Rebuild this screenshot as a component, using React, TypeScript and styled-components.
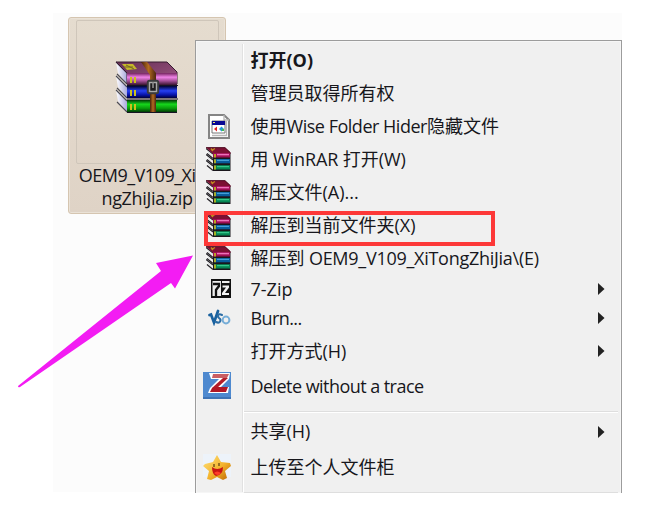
import React from "react";
import styled, { createGlobalStyle } from "styled-components";

const GlobalStyle = createGlobalStyle`
  body { margin: 0; background: #fff; }
  * { box-sizing: border-box; }
`;

const Page = styled.main`
  position: relative;
  width: 651px;
  height: 519px;
  padding: 13px 0 0 53px;
  overflow: hidden;
  background: #fff;
  color: #17171c;
  font-family: "Open Sans", "Noto Sans CJK SC", sans-serif;
  font-size: 18px;
`;

const Desktop = styled.section`
  width: 569px;
  height: 479px;
  padding: 4px 0 0 15px;
  background: #fcfcfc;
`;

const FileTile = styled.div`
  width: 158px;
  height: 197px;
  padding: 2px 7px;
  border: 1px solid #d5c5b0;
  border-radius: 3px;
  background: linear-gradient(#e5dccf, #dfd3c6);
  box-shadow: inset 0 0 0 1px #eae2d7;
`;

const Thumbnail = styled.div`
  display: flex;
  width: 143px;
  height: 144px;
  padding: 40px 0 0 38px;
  border: 1px solid #cfc6ba;
  border-radius: 2px;
`;

const FileName = styled.div`
  margin-left: -7px;
  width: 156px;
  line-height: 23px;
  text-align: center;
  white-space: nowrap;
`;

const NameLine = styled.div<{ $spacing: number }>`
  letter-spacing: ${(p) => p.$spacing}px;
`;

const Menu = styled.nav`
  position: absolute;
  left: 194.5px;
  top: 40px;
  width: 427.5px;
  height: 453px;
  padding: 3px 3px 0;
  border: 1.5px solid #9c9c9c;
  border-bottom: 0;
  background: #f0f0f0;
  box-shadow: inset 0 0 0 1px #f6f6f6;
`;

const MenuBody = styled.div`
  height: 448px;
  background: linear-gradient(to right, transparent 43px, #e1e1e1 43px, #e1e1e1 44px, #fff 44px, #fff 45px, transparent 45px);
`;

const Row = styled.div<{ $height: number }>`
  display: grid;
  grid-template-columns: 52px 1fr 20px;
  align-items: center;
  height: ${(p) => p.$height}px;
`;

const IconCell = styled.span<{ $shift: number }>`
  display: flex;
  padding-left: ${(p) => p.$shift}px;
`;

const Label = styled.span<{ $bold?: boolean; $lift: number }>`
  display: flex;
  align-items: baseline;
  height: 24px;
  margin-bottom: ${(p) => p.$lift}px;
  line-height: 24px;
  font-weight: ${(p) => (p.$bold ? 700 : 400)};
  white-space: pre;
`;

const Han = styled.span`
  font-family: "Noto Sans CJK SC", sans-serif;
  font-size: 18px;
`;

const Latin = styled.span<{ $spacing: number }>`
  letter-spacing: ${(p) => p.$spacing}px;
`;

const Separator = styled.hr<{ $before: number; $after: number }>`
  height: 2px;
  margin: ${(p) => p.$before}px 0 ${(p) => p.$after}px 45px;
  border: 0;
  border-top: 1px solid #dedede;
  background: #fff;
`;

const Highlight = styled.div`
  position: absolute;
  left: 204px;
  top: 211px;
  width: 291px;
  height: 35px;
  border: 4px solid #fd3838;
`;

const Pointer = styled.svg`
  position: absolute;
  left: 0;
  top: 240px;
`;

const Archive = () => (
  <svg width="64" height="53" viewBox="0 0 64 53">
    <defs>
      <linearGradient id="violet" x2="0" y2="1"><stop stopColor="#74245f" /><stop offset=".35" stopColor="#f083e7" /><stop offset=".65" stopColor="#a65099" /><stop offset="1" stopColor="#39142f" /></linearGradient>
      <linearGradient id="blue" x2="0" y2="1"><stop stopColor="#02022f" /><stop offset=".4" stopColor="#2640f4" /><stop offset=".75" stopColor="#0712a5" /><stop offset="1" stopColor="#010038" /></linearGradient>
      <linearGradient id="green" x2="0" y2="1"><stop stopColor="#003a05" /><stop offset=".35" stopColor="#16d71c" /><stop offset=".7" stopColor="#089b0a" /><stop offset="1" stopColor="#013906" /></linearGradient>
      <linearGradient id="cover" x2="1" y2="1"><stop stopColor="#663055" /><stop offset=".6" stopColor="#874670" /><stop offset="1" stopColor="#a55a90" /></linearGradient>
      <linearGradient id="strap"><stop stopColor="#47230c" /><stop offset=".5" stopColor="#b36b20" /><stop offset="1" stopColor="#4d260e" /></linearGradient>
      <linearGradient id="pages"><stop stopColor="#fff" /><stop offset="1" stopColor="#a9a9dc" /></linearGradient>
    </defs>
    {[28, 14, 0].map((y) => (
      <g key={y} transform={`translate(0 ${y})`}>
        <path d="M1 1 3 12 12 23 12 11Z" fill="url(#pages)" />
        <path d="M1 1 12 12M2 13 12 23" stroke="#4b4b55" strokeWidth="1.1" />
      </g>
    ))}
    <path d="M1 1H52L62 11V23H12V12Z" fill="url(#cover)" stroke="#361c31" strokeWidth="1" />
    <path d="M12 12H62V24H12Z" fill="url(#violet)" />
    <path d="M12 25H62V37H12Z" fill="url(#blue)" />
    <path d="M12 39H62V51H12Z" fill="url(#green)" />
    <path d="M12 24.5H63M12 38H63M12 51.5H62" stroke="#161323" />
    <path d="M7 3 18 3 22 8 12 9Z" fill="#c5b82a" />
    <path d="M11 4 19 8M9 6 18 6" stroke="#776526" />
    <path d="M16 16V22M20 16V22M16 29V35M20 29V35M16 43V49M20 43V49" stroke="#cbc11c" strokeWidth="2" />
    <path d="M26 1H32L41 12V24H35V14Z" fill="url(#strap)" />
    <path d="M35 31H41V51H35Z" fill="url(#strap)" />
    <rect x="33.5" y="20.5" width="9" height="11" rx="1" fill="#1e1d20" stroke="#3a3a3c" strokeWidth="3.4" />
    <rect x="34.5" y="21.5" width="7" height="9" fill="none" stroke="#aaa" strokeWidth="1.4" />
    <path d="M38 21V27" stroke="#8d8d8d" strokeWidth="1.6" />
  </svg>
);

const Books = () => (
  <svg width="26" height="25" viewBox="0 0 26 25">
    {[12, 6, 0].map((y) => (
      <g key={y} transform={`translate(0 ${y})`}>
        <path d="M0 1 7 6.5V12L1 6.5Z" fill="#fbfbfb" />
        <path d="M0 1.5 7 7M1 6.5 7 11.5" stroke="#28262b" strokeWidth="1.3" />
        <path d="M1.5 4.5 7 9.3" stroke="#c5c5ca" strokeWidth=".6" />
      </g>
    ))}
    <path d="M7 6H24.5V24H7Z" fill="#1a161c" />
    <path d="M0 .5H19L24.5 5.5V7H7Z" fill="#7d1033" />
    <path d="M0 .7H19L24.5 5.8" fill="none" stroke="#4c0b20" />
    <path d="M7 6H24V10.5H7Z" fill="#9e0c53" />
    <path d="M11 7.6H23" stroke="#ee72b9" strokeWidth="1.5" />
    <path d="M8 12H24V16.3H8Z" fill="#075b9a" />
    <path d="M11 13.4H23" stroke="#469fd4" strokeWidth="1.3" />
    <path d="M8 18.2H24V22.5H8Z" fill="#058653" />
    <path d="M11 19.6H23" stroke="#35c68b" strokeWidth="1.3" />
    <path d="M9 7V10.5M9 12.3V16.3M9 18.5V22.5" stroke="#b9b41e" strokeWidth="1.8" />
    <path d="M5 1.5 7 4M9 1.5 5.5 3.5" stroke="#c18d1e" strokeWidth="1.4" />
  </svg>
);

const WindowPage = () => (
  <svg width="22" height="25" viewBox="0 0 22 25">
    <path d="M1 1H16L21 6V24H1Z" fill="#fff" stroke="#858585" strokeWidth="2" />
    <path d="M16 1V6H21M18.5 7V21.5H4" fill="none" stroke="#b7b7b7" strokeWidth="1.3" />
    <path d="M4 7H17V19H4Z" fill="#fff" stroke="#777" />
    <path d="M4 7H17V11H4Z" fill="#080893" />
    <path d="M5 8.5H7" stroke="#f5e96d" />
    <path d="M6 15 9 12.5V17.5Z" fill="#e12222" />
    <path d="M11 15 13.5 12.5 16 15 13.5 17.5Z" fill="#249bd3" />
    <path d="M14 15H16V17H14Z" fill="#40bd50" />
  </svg>
);

const SevenZip = () => (
  <svg width="20" height="19" viewBox="0 0 20 19">
    <path d="M0 0H20V19H0Z" fill="#111" />
    <path d="M1.5 2H10V17H1.5ZM11 2H18.5V4H11Z" fill="#eee" />
    <path d="M2 5H8V7L5 11V17" fill="none" stroke="#111" strokeWidth="2.3" />
    <path d="M11.5 6.5H18V8.5L14 14H18V16H11V14L15 8.5H11.5Z" fill="#f5f5f5" />
  </svg>
);

const Vso = () => (
  <svg width="23" height="17" viewBox="0 0 23 17" fill="none" strokeLinecap="round">
    <path d="M1.5 6 3 5.5 6 13.5 10 2" stroke="#19619f" strokeWidth="2.7" />
    <path d="M14 6C10 4 9 7 11 9 14 11 12 15 8 13" stroke="#2b6da5" strokeWidth="2" />
    <circle cx="18" cy="11" r="3.4" stroke="#76add7" strokeWidth="2" />
  </svg>
);

const TraceDelete = () => (
  <svg width="28" height="27" viewBox="0 0 28 27">
    <path d="M0 0H28V27H0Z" fill="#4e89cf" />
    <path d="M6 1H27L26 7 18 15H26L25 21H5L7 16 16 7H8Z" fill="#fff" />
    <path d="M10 2H26L24 6H9Z" fill="#c95e63" />
    <path d="M20 6H25L14 16H9Z" fill="#b21d29" />
    <path d="M13 15H25L23 20H7L9 16Z" fill="#b01725" />
    <path d="M0 26H28" stroke="#3e73b5" strokeWidth="2" />
  </svg>
);

const Star = () => (
  <svg width="28" height="27" viewBox="0 0 28 27">
    <defs><linearGradient id="gold" x2="1" y2="1"><stop stopColor="#ffe480" /><stop offset=".55" stopColor="#f4b42e" /><stop offset="1" stopColor="#bc6500" /></linearGradient></defs>
    <path d="M0 0H28V23H0Z" fill="#edf3fa" />
    <path d="M14 1 18 8 27 9 28 12 22 17 24 24 20 26 14 23 8 26 4 25 6 17 0 12 2 10 10 8Z" fill="url(#gold)" />
    <path d="M9 13Q14 17 20 13Q20 21 13 22Q9 20 9 13Z" fill="#c91513" />
    <path d="M11 19Q14 16 18 19Q15 23 11 19Z" fill="#ff3c29" />
    <path d="M11 10V13M16 9V12" stroke="#795417" strokeWidth="1.5" />
  </svg>
);

const Chevron = () => (
  <svg width="7" height="12" viewBox="0 0 7 12"><path d="M0 0 6.5 6 0 12Z" fill="#222" /></svg>
);

interface Item {
  text: string;
  height: number;
  spacing?: number;
  bold?: boolean;
  icon?: React.ReactNode;
  shift?: number;
  submenu?: boolean;
}

const mainItems: Item[] = [
  { text: "打开(O)", height: 33, bold: true },
  { text: "管理员取得所有权", height: 33 },
  { text: "使用Wise Folder Hider隐藏文件", height: 33, spacing: -0.48, icon: <WindowPage />, shift: 9 },
  { text: "用 WinRAR 打开(W)", height: 33, spacing: -0.1, icon: <Books />, shift: 7 },
  { text: "解压文件(A)...", height: 33, icon: <Books />, shift: 7 },
  { text: "解压到当前文件夹(X)", height: 33, icon: <Books />, shift: 7 },
  { text: "解压到 OEM9_V109_XiTongZhiJia\\(E)", height: 33, spacing: -0.27, icon: <Books />, shift: 7 },
  { text: "7-Zip", height: 27, icon: <SevenZip />, shift: 12, submenu: true },
  { text: "Burn...", height: 31, spacing: -0.6, icon: <Vso />, shift: 9, submenu: true },
  { text: "打开方式(H)", height: 36, submenu: true },
  { text: "Delete without a trace", height: 33, spacing: -0.55, icon: <TraceDelete />, shift: 4 },
];

const sharingItems: Item[] = [
  { text: "共享(H)", height: 37, submenu: true },
  { text: "上传至个人文件柜", height: 34, icon: <Star />, shift: 4 },
];

const hanRun = /[\u3400-\u9fff]/;

const MenuItem = ({ text, height, spacing = 0, bold, icon, shift = 0, submenu }: Item) => (
  <Row $height={height}>
    <IconCell $shift={shift}>{icon}</IconCell>
    <Label $bold={bold} $lift={hanRun.test(text) ? 3 : 0}>
      {text.split(/([\u3400-\u9fff]+)/).filter(Boolean).map((part, i) =>
        hanRun.test(part)
          ? <Han key={i}>{part}</Han>
          : <Latin key={i} $spacing={spacing}>{part}</Latin>
      )}
    </Label>
    {submenu && <Chevron />}
  </Row>
);

export default function App() {
  return (
    <Page>
      <GlobalStyle />
      <Desktop>
        <FileTile>
          <Thumbnail><Archive /></Thumbnail>
          <FileName>
            <NameLine $spacing={-0.5}>OEM9_V109_XiTo</NameLine>
            <NameLine $spacing={-0.3}>ngZhiJia.zip</NameLine>
          </FileName>
        </FileTile>
      </Desktop>
      <Menu>
        <MenuBody>
          {mainItems.map((item) => <MenuItem key={item.text} {...item} />)}
          <Separator $before={9} $after={0} />
          {sharingItems.map((item) => <MenuItem key={item.text} {...item} />)}
          <Separator $before={8} $after={0} />
        </MenuBody>
      </Menu>
      <Highlight />
      <Pointer width="200" height="155" viewBox="0 240 200 155">
        <path d="M193 255.5 156 263 161 271 18 386Q18 388 20 387L171 283 175 288.5Z" fill="#f31cf3" />
      </Pointer>
    </Page>
  );
}
